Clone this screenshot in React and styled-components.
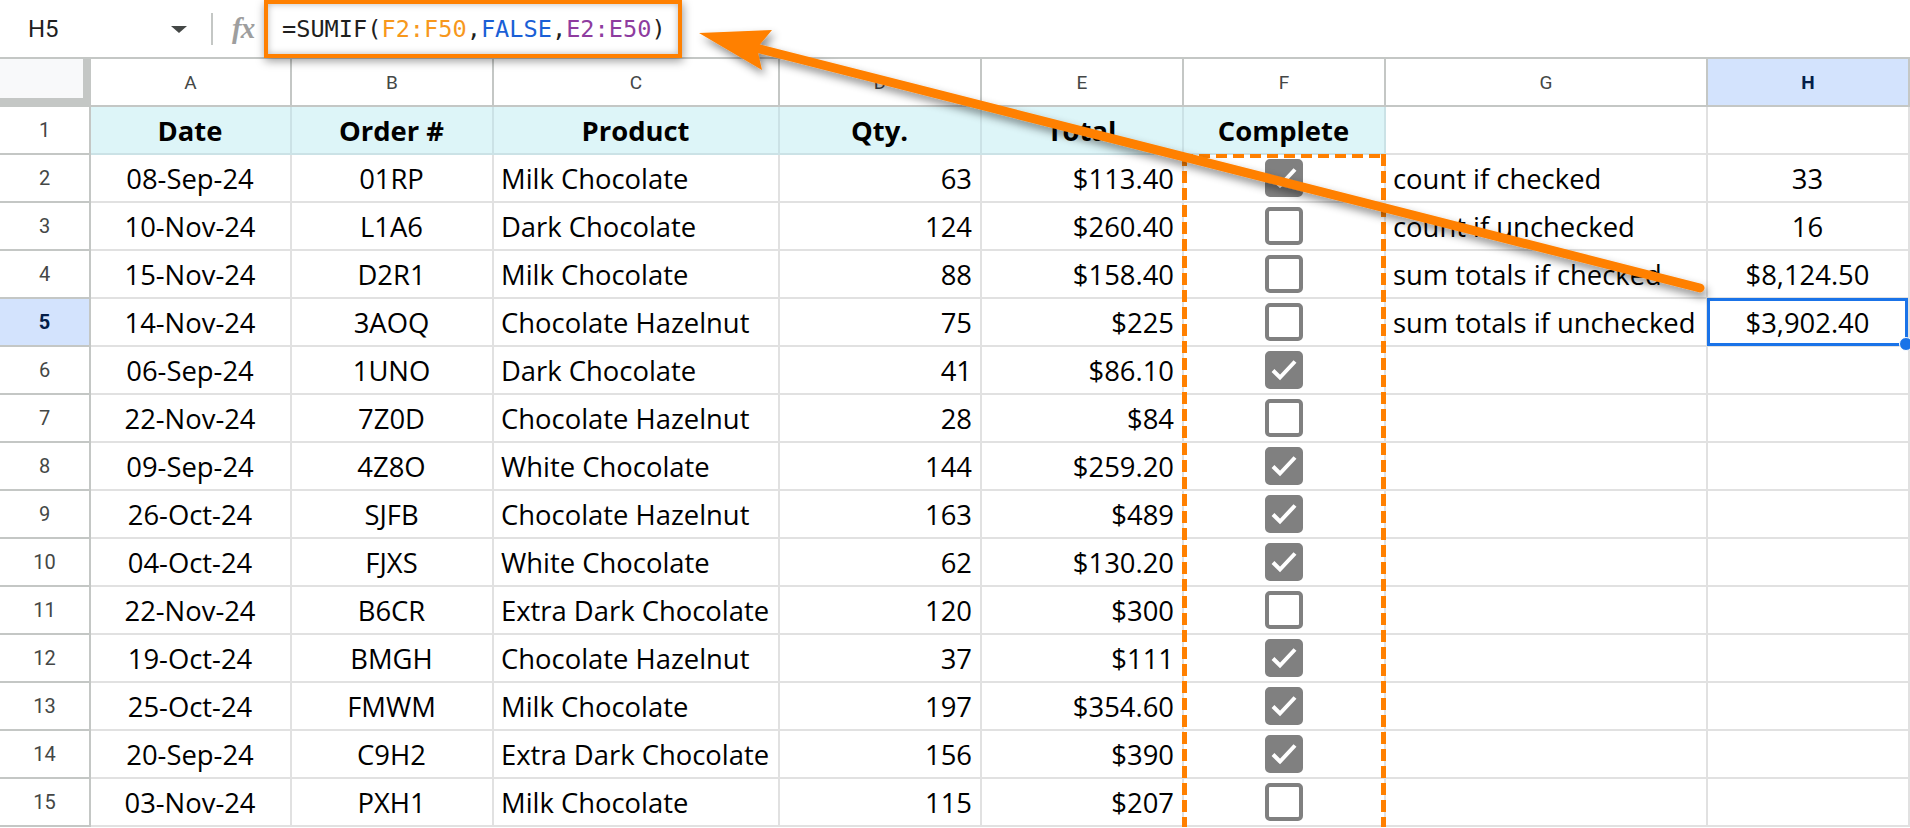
import React from 'react';
import styled, { createGlobalStyle } from 'styled-components';

const GlobalStyle = createGlobalStyle`
  html, body {
    margin: 0;
    padding: 0;
    background: #fff;
    overflow: hidden;
  }
`;

const rows = [
  ['08-Sep-24', '01RP', 'Milk Chocolate', 63, '$113.40', true],
  ['10-Nov-24', 'L1A6', 'Dark Chocolate', 124, '$260.40', false],
  ['15-Nov-24', 'D2R1', 'Milk Chocolate', 88, '$158.40', false],
  ['14-Nov-24', '3AOQ', 'Chocolate Hazelnut', 75, '$225', false],
  ['06-Sep-24', '1UNO', 'Dark Chocolate', 41, '$86.10', true],
  ['22-Nov-24', '7Z0D', 'Chocolate Hazelnut', 28, '$84', false],
  ['09-Sep-24', '4Z8O', 'White Chocolate', 144, '$259.20', true],
  ['26-Oct-24', 'SJFB', 'Chocolate Hazelnut', 163, '$489', true],
  ['04-Oct-24', 'FJXS', 'White Chocolate', 62, '$130.20', true],
  ['22-Nov-24', 'B6CR', 'Extra Dark Chocolate', 120, '$300', false],
  ['19-Oct-24', 'BMGH', 'Chocolate Hazelnut', 37, '$111', true],
  ['25-Oct-24', 'FMWM', 'Milk Chocolate', 197, '$354.60', true],
  ['20-Sep-24', 'C9H2', 'Extra Dark Chocolate', 156, '$390', true],
  ['03-Nov-24', 'PXH1', 'Milk Chocolate', 115, '$207', false],
];

const summary = [
  ['count if checked', '33'],
  ['count if unchecked', '16'],
  ['sum totals if checked', '$8,124.50'],
  ['sum totals if unchecked', '$3,902.40'],
];

const letters = ['A', 'B', 'C', 'D', 'E', 'F', 'G', 'H'];
const headers = ['Date', 'Order #', 'Product', 'Qty.', 'Total', 'Complete'];
const aligns = ['center', 'center', 'left', 'right', 'right', 'center'];

const Page = styled.div`
  position: relative;
  width: 1910px;
  height: 828px;
  overflow: hidden;
  font-family: 'Open Sans', 'Noto Sans', sans-serif;
  color: #000;
`;

const FormulaBar = styled.div`
  display: flex;
  align-items: center;
  height: 59px;
  box-sizing: border-box;
  border-bottom: 2px solid #c4c7c5;
  font-family: Roboto, 'Liberation Sans', sans-serif;
`;

const NameBox = styled.div`
  width: 211px;
  box-sizing: border-box;
  padding: 0 24px 0 28px;
  display: flex;
  align-items: center;
  justify-content: space-between;
  font-size: 24px;
  color: #1f1f1f;
`;

const Caret = styled.span`
  width: 0;
  height: 0;
  border-left: 8px solid transparent;
  border-right: 8px solid transparent;
  border-top: 7px solid #444746;
  margin-top: 2px;
`;

const Divider = styled.span`
  width: 2px;
  height: 32px;
  background: #c4c7c5;
`;

const Fx = styled.span`
  margin: 0 3px 0 19px;
  width: 29px;
  font-family: 'Liberation Serif', serif;
  font-style: italic;
  font-weight: 700;
  font-size: 29px;
  color: #9e9e9e;
  letter-spacing: -1px;
`;

const FormulaBox = styled.div`
  align-self: flex-start;
  height: 58px;
  width: 418px;
  box-sizing: border-box;
  border: 4px solid #ff8000;
  padding-left: 14px;
  display: flex;
  align-items: center;
  font-family: 'DejaVu Sans Mono', 'Liberation Mono', monospace;
  font-size: 23.6px;
  color: #1f1f1f;
  background: #fff;
  box-shadow: 1px 3px 9px rgba(0, 0, 0, 0.4), inset 0 0 7px rgba(0, 0, 0, 0.28);
  position: relative;
  z-index: 2;
`;

const Ref = styled.span`
  color: ${p => p.$color};
`;

const Sheet = styled.div`
  display: grid;
  grid-template-columns: 91px 201px 202px 286px 202px 202px 202px 322px 202px;
  grid-auto-rows: 48px;
`;

const Corner = styled.div`
  grid-column: 1;
  grid-row: 1;
  background: #f8f9fa;
  border-right: 8px solid #c4c7c5;
  border-bottom: 9px solid #c4c7c5;
`;

const ColHead = styled.div`
  grid-column: ${p => p.$col};
  grid-row: 1;
  display: flex;
  align-items: center;
  justify-content: center;
  border-right: 2px solid #c4c7c5;
  border-bottom: 2px solid #c4c7c5;
  background: ${p => (p.$active ? '#d3e3fd' : '#fff')};
  color: ${p => (p.$active ? '#041e49' : '#444746')};
  font-weight: ${p => (p.$active ? 700 : 400)};
  font-family: Roboto, 'Liberation Sans', sans-serif;
  font-size: 19px;
`;

const RowHead = styled.div`
  grid-column: 1;
  grid-row: ${p => p.$row};
  display: flex;
  align-items: center;
  justify-content: center;
  border-right: 2px solid #c4c7c5;
  border-bottom: 2px solid #c4c7c5;
  background: ${p => (p.$active ? '#d3e3fd' : '#fff')};
  color: ${p => (p.$active ? '#041e49' : '#444746')};
  font-weight: ${p => (p.$active ? 700 : 400)};
  font-family: Roboto, 'Liberation Sans', sans-serif;
  font-size: 20px;
`;

const justify = { left: 'flex-start', center: 'center', right: 'flex-end' };

const Cell = styled.div`
  grid-column: ${p => p.$col};
  grid-row: ${p => p.$row};
  display: flex;
  align-items: center;
  justify-content: ${p => justify[p.$align || 'left']};
  padding: 0 8px 0 7px;
  min-width: 0;
  overflow: hidden;
  white-space: nowrap;
  font-size: 27.4px;
  border-right: 2px solid ${p => (p.$head ? '#cbe2e6' : '#e1e1e1')};
  border-bottom: 2px solid ${p => (p.$head ? '#cbe2e6' : '#e1e1e1')};
  background: ${p => (p.$head ? '#ddf5f8' : '#fff')};
  font-weight: ${p => (p.$head ? 700 : 400)};
`;

const Box = styled.span`
  width: 38px;
  height: 38px;
  box-sizing: border-box;
  border-radius: 5px;
  border: 4px solid #808080;
  background: ${p => (p.$checked ? '#808080' : '#fff')};
  display: flex;
  align-items: center;
  justify-content: center;
`;

const RangeMark = styled.div`
  grid-column: 7;
  grid-row: 3 / 17;
  margin: -1px 0 0 -2px;
  pointer-events: none;
  background:
    repeating-linear-gradient(to bottom, #ff8000 0 12px, transparent 12px 17px) left top / 5px 100% no-repeat,
    repeating-linear-gradient(to bottom, #ff8000 0 12px, transparent 12px 17px) right top / 5px 100% no-repeat,
    repeating-linear-gradient(to right, #ff8000 0 11px, transparent 11px 17px) left top / 100% 4px no-repeat;
`;

const Selection = styled.div`
  grid-column: 9;
  grid-row: 6;
  position: relative;
  margin: -1px 2px 1px -1px;
  border: 3px solid #1a73e8;
  pointer-events: none;
`;

const Handle = styled.span`
  position: absolute;
  right: -8px;
  bottom: -8px;
  width: 12px;
  height: 12px;
  border-radius: 50%;
  background: #1a73e8;
  border: 1px solid #fff;
`;

const Overlay = styled.svg`
  position: absolute;
  left: 0;
  top: 0;
  pointer-events: none;
  z-index: 5;
`;

const Checkbox = ({ checked }) => (
  <Box $checked={checked}>
    {checked && (
      <svg width="30" height="30" viewBox="0 0 30 30">
        <path d="M4 15.5 L11 22.5 L26 6.5" fill="none" stroke="#fff" strokeWidth="4" />
      </svg>
    )}
  </Box>
);

const Arrow = () => (
  <Overlay width="1910" height="828" viewBox="0 0 1910 828">
    <defs>
      <filter id="shade" x="-10%" y="-50%" width="120%" height="200%">
        <feDropShadow dx="3" dy="5" stdDeviation="4" floodColor="#000" floodOpacity="0.45" />
      </filter>
    </defs>
    <g filter="url(#shade)">
      <line x1="752" y1="47" x2="1700" y2="288" stroke="#ff8000" strokeWidth="9" strokeLinecap="round" />
      <polygon points="699,33 772,30 757,48 762,70" fill="#ff8000" />
    </g>
  </Overlay>
);

export default function App() {
  return (
    <Page>
      <GlobalStyle />
      <FormulaBar>
        <NameBox>
          H5
          <Caret />
        </NameBox>
        <Divider />
        <Fx>fx</Fx>
        <FormulaBox>
          =SUMIF(<Ref $color="#f7981d">F2:F50</Ref>,<Ref $color="#1a5fd6">FALSE</Ref>,
          <Ref $color="#8e3c9f">E2:E50</Ref>)
        </FormulaBox>
      </FormulaBar>
      <Sheet>
        <Corner />
        {letters.map((l, i) => (
          <ColHead key={l} $col={i + 2} $active={l === 'H'}>
            {l}
          </ColHead>
        ))}
        <RowHead $row={2}>1</RowHead>
        {headers.map((h, i) => (
          <Cell key={h} $col={i + 2} $row={2} $head $align="center">
            {h}
          </Cell>
        ))}
        <Cell $col={8} $row={2} />
        <Cell $col={9} $row={2} />
        {rows.map((r, idx) => {
          const row = idx + 3;
          const side = summary[idx];
          return (
            <React.Fragment key={row}>
              <RowHead $row={row} $active={idx + 2 === 5}>
                {idx + 2}
              </RowHead>
              {r.slice(0, 5).map((v, i) => (
                <Cell key={i} $col={i + 2} $row={row} $align={aligns[i]}>
                  {v}
                </Cell>
              ))}
              <Cell $col={7} $row={row} $align="center">
                <Checkbox checked={r[5]} />
              </Cell>
              <Cell $col={8} $row={row}>{side ? side[0] : ''}</Cell>
              <Cell $col={9} $row={row} $align="center">{side ? side[1] : ''}</Cell>
            </React.Fragment>
          );
        })}
        <RangeMark />
        <Selection>
          <Handle />
        </Selection>
      </Sheet>
      <Arrow />
    </Page>
  );
}
